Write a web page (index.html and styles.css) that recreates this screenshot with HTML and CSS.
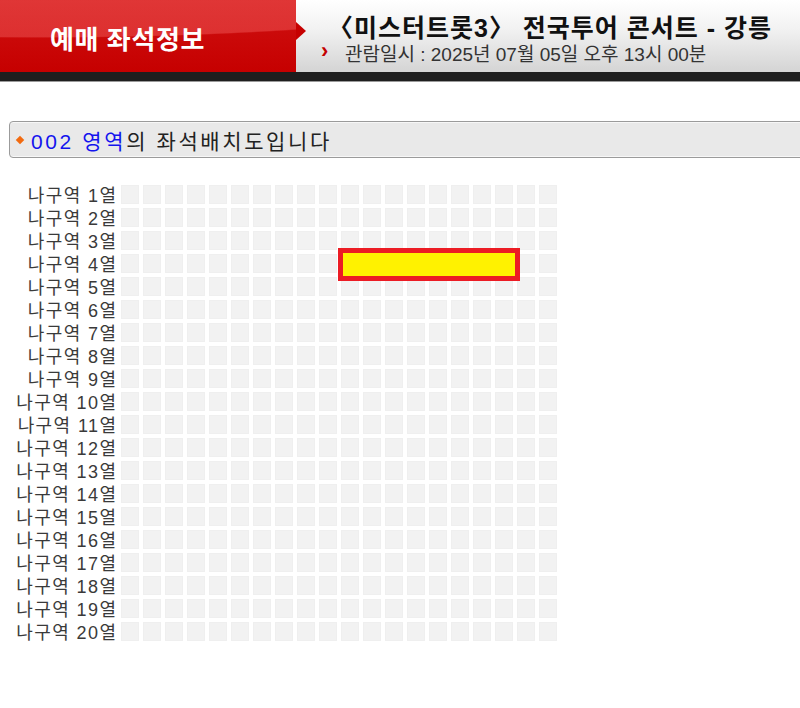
FILE: index.html
```html
<!DOCTYPE html>
<html lang="ko">
<head>
<meta charset="utf-8">
<link rel="stylesheet" href="styles.css">
</head>
<body>
<div class="header">
  <div class="brand"><span class="brand-text">예매 좌석정보</span></div>
  <div class="event">
    <div class="event-title">〈미스터트롯3〉 전국투어 콘서트 - 강릉</div>
    <div class="event-date"><span class="chev">›</span>관람일시 : 2025년 07월 05일 오후 13시 00분</div>
  </div>
</div>
<div class="darkbar"></div>

<div class="info">
  <span class="diamond"></span>
  <span class="zone">002 영역</span><span class="info-text">의 좌석배치도입니다</span>
</div>

<div class="seatmap">
  <div class="labels" id="labels"></div>
  <div class="seats" id="seats">
    <div class="selected"></div>
  </div>
</div>
<script src="app.js"></script>
</body>
</html>
```

FILE: app.js
```js
var labels = document.getElementById('labels');
var seats = document.getElementById('seats');
for (var r = 1; r <= 20; r++) {
  var l = document.createElement('div');
  l.className = 'label';
  l.textContent = '나구역 ' + r + '열';
  labels.appendChild(l);
  for (var c = 0; c < 20; c++) {
    var s = document.createElement('div');
    s.className = 'seat';
    seats.appendChild(s);
  }
}
```

FILE: styles.css
```css
html, body {
  margin: 0;
  padding: 0;
  background: #fff;
  font-family: "Liberation Sans", "Noto Sans CJK KR", sans-serif;
}
.header {
  display: flex;
  height: 72px;
}
.brand {
  width: 296px;
  flex: none;
  position: relative;
  background:
    radial-gradient(ellipse 520px 60px at 40px -22px, rgba(255,120,120,0.35) 0 98%, rgba(255,120,120,0) 100%),
    linear-gradient(180deg, #cf1212 0%, #c60000 100%);
  display: flex;
  align-items: center;
}
.brand::after {
  content: "";
  position: absolute;
  right: -10px;
  top: 22px;
  border-left: 10px solid #c60000;
  border-top: 9px solid transparent;
  border-bottom: 9px solid transparent;
  z-index: 2;
}
.brand-text {
  margin-left: 50px;
  color: #fff;
  font-size: 26px;
  font-weight: bold;
  letter-spacing: 0.6px;
  position: relative;
  top: 1px;
}
.event {
  flex: 1;
  background: linear-gradient(180deg, #ffffff 0%, #f2f2f2 40%, #d4d4d4 100%);
  padding-left: 32px;
  position: relative;
}
.event-title {
  font-size: 25px;
  font-weight: bold;
  color: #111;
  line-height: 26px;
  margin-top: 15px;
  white-space: nowrap;
  letter-spacing: 1px;
}
.event-date {
  font-size: 19px;
  color: #333;
  line-height: 22px;
  margin-top: 3px;
  white-space: nowrap;
  position: relative;
  left: 17px;
}
.chev {
  position: absolute;
  left: -24px;
  top: -4px;
  color: #c40000;
  font-weight: bold;
  font-size: 22px;
}
.darkbar {
  height: 9px;
  background: #1e1e1e;
  border-bottom: 1px solid #9a9a9a;
}

.info {
  margin: 39px 0 0 9px;
  width: 820px;
  height: 35px;
  border: 1px solid #9b9b9b;
  border-radius: 4px;
  background: #e9e9e9;
  box-shadow: inset 0 1px 0 #f7f7f7, inset 0 -1px 0 #f7f7f7;
  display: flex;
  align-items: center;
  font-size: 21px;
  color: #222;
  letter-spacing: 2.6px;
}
.diamond {
  width: 6px;
  height: 6px;
  background: #f26a10;
  transform: rotate(45deg);
  margin: 0 8px 0 7px;
}
.zone {
  color: #1414ee;
}

.seatmap {
  display: flex;
  margin-top: 25px;
}
.labels {
  width: 116px;
  flex: none;
  padding-top: 2px;
}
.label {
  height: 23px;
  line-height: 23px;
  text-align: right;
  font-size: 18px;
  color: #3a3a3a;
  letter-spacing: 1.4px;
  margin-right: -1.4px;
  white-space: nowrap;
}
.seats {
  margin-left: 5px;
  display: grid;
  grid-template-columns: repeat(20, 18px);
  grid-auto-rows: 19px;
  column-gap: 4px;
  row-gap: 4px;
  position: relative;
  align-self: flex-start;
  margin-top: 2px;
}
.seat {
  background: #f2f2f2;
  box-shadow: inset 0 0 0 1px #efefef;
}
.selected {
  position: absolute;
  left: 217px;
  top: 63px;
  width: 172px;
  height: 23px;
  border: 5px solid #ec1c24;
  background: #fff200;
  z-index: 2;
}
```
